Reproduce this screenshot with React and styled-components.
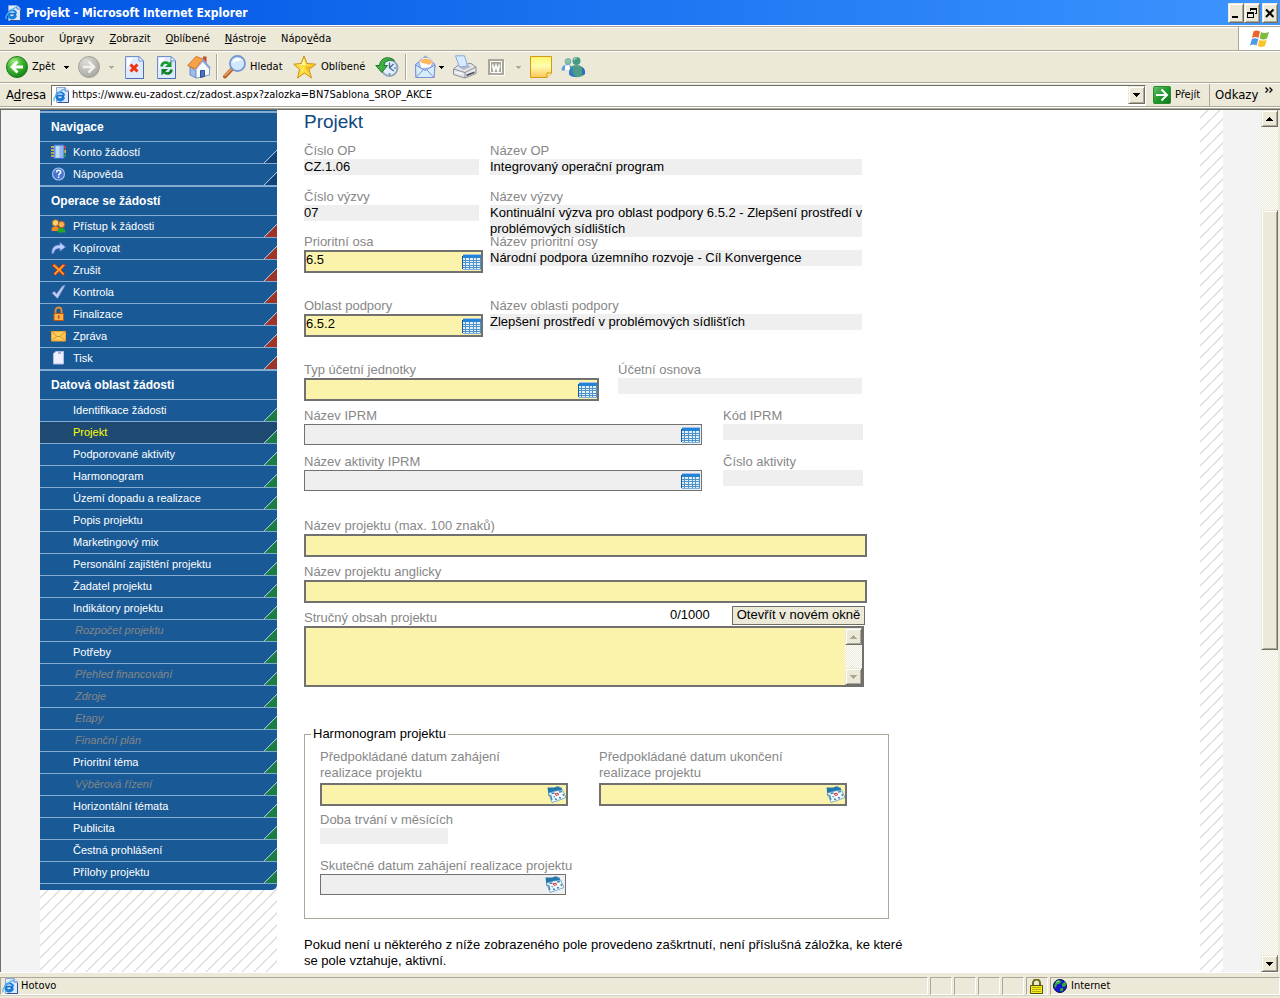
import React from 'react';
import styled, { createGlobalStyle, css } from 'styled-components';

const CHROME = '"DejaVu Sans Condensed", "DejaVu Sans", sans-serif';
const PAGE = '"Liberation Sans", Arial, sans-serif';
const FACE = '#ece9d8';
const SHADOW = '#aca899';
const DARK = '#716f64';

const GlobalStyle = createGlobalStyle`
  *, *::before, *::after { box-sizing: border-box; }
  html, body { margin: 0; height: 100%; }
  #root { height: 100%; }
  button, input, textarea { font: inherit; color: inherit; margin: 0; padding: 0; border-radius: 0; }
  svg { display: block; flex: none; }
`;

const bevel = css`
  border: 1px solid;
  border-color: ${FACE} ${DARK} ${DARK} ${FACE};
  box-shadow: inset 1px 1px 0 #fff, inset -1px -1px 0 ${SHADOW};
  background: ${FACE};
`;

const hatch = css`
  background-color: #fff;
  background-image: linear-gradient(135deg, transparent 45%, #dadada 47%, #dadada 53%, transparent 55%);
  background-size: 12px 12px;
  background-position: 0 -4px;
`;

const checker = css`
  background: repeating-conic-gradient(#fff 0 25%, ${FACE} 0 50%) 0 0 / 2px 2px;
`;

/* ---------- window frame ---------- */

const Window = styled.div`
  display: flex;
  flex-direction: column;
  height: 100vh;
  overflow: hidden;
  background: ${FACE};
  font: 11px/14px ${CHROME};
  color: #000;
`;

const TitleBar = styled.header`
  display: flex;
  align-items: center;
  flex: none;
  height: 25px;
  padding: 0 2px 0 5px;
  gap: 5px;
  background: linear-gradient(90deg, #0054e3, #3d95ff);
  color: #fff;
`;

const WindowTitle = styled.h1`
  flex: 1;
  margin: 0;
  font-size: 12px;
  line-height: 16px;
  font-weight: bold;
`;

const WindowButtons = styled.div`
  display: flex;
`;

const CaptionButton = styled.button`
  ${bevel}
  display: grid;
  place-items: center;
  width: 16px;
  height: 20px;
  margin-left: ${(p) => (p.$apart ? 2 : 0)}px;
  color: #000;
`;

const MenuBar = styled.nav`
  display: flex;
  flex: none;
  height: 26px;
  border-top: 1px solid #fff;
  border-bottom: 1px solid ${SHADOW};
  box-shadow: inset 0 1px 0 ${SHADOW}, inset 0 2px 0 #fff;
`;

const MenuItems = styled.div`
  display: flex;
  flex: 1;
  align-items: center;
  gap: 15px;
  padding: 2px 0 0 9px;
  border-right: 1px solid ${SHADOW};
`;

const MenuItem = styled.button`
  border: 0;
  background: none;
`;

const Flag = styled.div`
  display: grid;
  place-items: center;
  width: 41px;
  margin-top: 2px;
  border-left: 1px solid #fff;
  background: #fff;
`;

const ToolBar = styled.div`
  display: flex;
  align-items: center;
  flex: none;
  height: 32px;
  padding-left: 6px;
  border-top: 1px solid #fff;
  border-bottom: 1px solid ${SHADOW};
`;

const Tool = styled.button`
  display: flex;
  align-items: center;
  flex: none;
  gap: 4px;
  width: ${(p) => p.$w}px;
  border: 0;
  background: none;
  white-space: nowrap;
`;

const Separator = styled.span`
  flex: none;
  width: ${(p) => p.$w}px;
  height: 26px;
  border-left: 1px solid ${SHADOW};
  box-shadow: inset 1px 0 0 #fff;
`;

const AddressBar = styled.form`
  display: flex;
  align-items: center;
  flex: none;
  height: 24px;
  padding-left: 6px;
  border-top: 1px solid #fff;
  border-bottom: 1px solid ${SHADOW};
`;

const AddressLabel = styled.label`
  width: 45px;
  font-size: 13px;
  line-height: 16px;
`;

const AddressField = styled.div`
  display: flex;
  align-items: center;
  flex: 1;
  height: 21px;
  padding-left: 1px;
  gap: 3px;
  border: 1px solid;
  border-color: ${DARK} #fff #fff ${DARK};
  background: #fff;
`;

const AddressInput = styled.input`
  flex: 1;
  min-width: 0;
  border: 0;
  outline: 0;
  background: none;
`;

const DropButton = styled.button`
  ${bevel}
  display: grid;
  place-items: center;
  width: 17px;
  height: 18px;
`;

const GoButton = styled.button`
  display: flex;
  align-items: center;
  gap: 4px;
  width: 56px;
  margin-left: 7px;
  border: 0;
  background: none;
`;

const Links = styled.button`
  display: flex;
  align-items: flex-start;
  justify-content: space-between;
  width: 71px;
  height: 22px;
  padding: 3px 7px 0 5px;
  border: 0;
  border-left: 1px solid ${SHADOW};
  background: none;
  font-size: 13px;
  line-height: 16px;
`;

/* ---------- document area ---------- */

const Viewport = styled.div`
  display: flex;
  flex: 1;
  min-height: 0;
  margin-top: 2px;
  border-top: 1px solid ${DARK};
  border-left: 1px solid ${DARK};
  box-shadow: 0 -1px 0 ${SHADOW}, 0 -2px 0 #fff;
`;

const PageBackground = styled.div`
  flex: 1;
  min-width: 0;
  padding: 0 38px 0 39px;
  overflow: hidden;
  background: #f3f3f3;
`;

const PageBody = styled.div`
  display: flex;
  min-height: 100%;
  padding-right: 23px;
  ${hatch}
  background-position: right 23px top -4px;
`;

const Aside = styled.aside`
  flex: none;
  width: 237px;
  ${hatch}
`;

const SideNav = styled.nav`
  padding: 1px 0 6px;
  border-bottom-right-radius: 5px;
  background: #195a96;
  color: #fff;
  font-family: ${PAGE};
`;

const SideHeading = styled.h2`
  margin: 0;
  padding: 7px 0 6px 11px;
  border-top: 2px solid #85abd0;
  border-bottom: 1px solid #85abd0;
  font-size: 12px;
  line-height: 15px;
  font-weight: bold;
`;

const SideList = styled.ul`
  margin: 0;
  padding: 0;
  list-style: none;
`;

const SideItem = styled.li`
  border-bottom: 1px solid #85abd0;
  &:last-child { border-bottom-width: ${(p) => (p.$closed ? 1 : 0)}px; }
`;

const SideLink = styled.a`
  display: flex;
  align-items: center;
  height: 21px;
  padding-bottom: 2px;
  padding-left: ${(p) => (p.$icon ? 11 : p.$off ? 35 : 33)}px;
  gap: 6px;
  background: linear-gradient(135deg, transparent 48%, #a9c4de 49%, #a9c4de 53%, ${(p) => p.$corner} 54%)
    right bottom / 13px 13px no-repeat ${(p) => (p.$on ? '#1e4970' : 'transparent')};
  color: ${(p) => (p.$off ? '#858585' : p.$on ? '#ffff00' : '#fff')};
  font-style: ${(p) => (p.$off ? 'italic' : 'normal')};
  font-size: 11px;
  line-height: 14px;
  text-decoration: none;
`;

const Main = styled.main`
  flex: 1;
  min-width: 0;
  padding: 0 0 24px 27px;
  background: #fff;
  font: 13px/16px ${PAGE};
`;

const PageTitle = styled.h2`
  margin: 0;
  padding: 0 0 9px;
  color: #0f4880;
  font-size: 19px;
  line-height: 24px;
  font-weight: normal;
`;

const FormRow = styled.div`
  display: flex;
  height: ${(p) => p.$h}px;
  gap: ${(p) => p.$gap || 0}px;
`;

const Field = styled.div`
  flex: none;
  width: ${(p) => p.$w}px;
`;

const Label = styled.label`
  display: block;
  color: #878787;
  white-space: nowrap;
`;

const Value = styled.output`
  display: block;
  min-height: 16px;
  background: #efefef;
  white-space: nowrap;
`;

const Box = styled.div`
  display: flex;
  align-items: center;
  height: ${(p) => (p.$plain ? 21 : 23)}px;
  margin-top: ${(p) => (p.$low ? 2 : 0)}px;
  padding-right: ${(p) => (p.$plain ? 1 : 0)}px;
  border: ${(p) => (p.$plain ? 1 : 2)}px solid #71716f;
  background: ${(p) => (p.$plain ? '#efefef' : '#fbf3ac')};
`;

const TextInput = styled.input`
  flex: 1;
  align-self: flex-start;
  min-width: 0;
  height: 16px;
  border: 0;
  outline: 0;
  background: none;
`;

const PickButton = styled.button`
  border: 0;
  background: none;
`;

const SummaryHead = styled.div`
  display: flex;
  align-items: center;
  width: 561px;
  height: 16px;
`;

const Grow = styled.span`
  flex: 1;
`;

const Counter = styled.span`
  width: 62px;
  margin-top: -6px;
`;

const OpenButton = styled.button`
  height: 19px;
  width: 133px;
  margin-top: -6px;
  border: 1px solid ${DARK};
  background: ${FACE};
  line-height: 16px;
  white-space: nowrap;
`;

const AreaBox = styled.div`
  display: flex;
  width: 560px;
  height: 61px;
  border: 2px solid #71716f;
  background: #fbf3ac;
`;

const TextArea = styled.textarea`
  flex: 1;
  border: 0;
  outline: 0;
  resize: none;
  overflow: hidden;
  background: none;
`;

const Schedule = styled.fieldset`
  width: 585px;
  margin: 0;
  padding: 7px 6px 23px;
  border: 1px solid ${SHADOW};
`;

const Legend = styled.legend`
  padding: 0 2px;
`;

const ScheduleRows = styled.div`
  padding-left: 9px;
`;

const Note = styled.p`
  max-width: 600px;
  margin: 18px 0 0;
`;

/* ---------- scrollbars ---------- */

const ScrollBar = styled.div`
  display: flex;
  flex-direction: column;
  flex: none;
  width: 17px;
  margin-right: ${(p) => (p.$edge ? 2 : 0)}px;
  ${checker}
`;

const ScrollButton = styled.button`
  ${bevel}
  display: grid;
  place-items: center;
  flex: none;
  width: 17px;
  height: 17px;
  color: ${(p) => (p.disabled ? SHADOW : '#000')};
`;

const Track = styled.div`
  flex: ${(p) => p.$part} 1 0;
`;

const Thumb = styled.div`
  ${bevel}
  flex: ${(p) => p.$part} 1 0;
`;

/* ---------- status bar ---------- */

const StatusBar = styled.footer`
  display: flex;
  flex: none;
  height: 26px;
  gap: 2px;
  padding: 4px 0 3px;
  border-top: 1px solid #fff;
  box-shadow: inset 0 -2px 0 ${FACE}, inset 0 -3px 0 #d6d2c2;
`;

const StatusPane = styled.div`
  display: flex;
  align-items: center;
  flex: ${(p) => (p.$w ? 'none' : 1)};
  width: ${(p) => (p.$w ? p.$w + 'px' : 'auto')};
  padding-left: ${(p) => p.$pad || 0}px;
  gap: ${(p) => p.$gap || 4}px;
  border: 1px solid;
  border-color: ${SHADOW} #fff #fff ${SHADOW};
`;

/* ---------- drawings ---------- */

const Caret = ({ color = 'currentColor', up }) => (
  <svg width="7" height="4" viewBox="0 0 7 4" shapeRendering="crispEdges">
    <path d={up ? 'M3 0h1v1h1v1h1v1h1v1H0V3h1V2h1V1h1z' : 'M0 0h7v1H6v1H5v1H4v1H3V3H2V2H1V1H0z'} fill={color} />
  </svg>
);

const SmallCaret = ({ color = '#000' }) => (
  <svg width="5" height="3" viewBox="0 0 5 3" shapeRendering="crispEdges">
    <path d="M0 0h5v1H4v1H3v1H2V2H1V1H0z" fill={color} />
  </svg>
);

const PageIE = () => (
  <svg width="16" height="16" viewBox="0 0 16 16">
    <path d="M3.500.500h8.500l3.500 3.500v11.500h-12z" fill="#dfe9fc" stroke="#8fa6d6" />
    <path d="M12 .5v3.500h3.500" fill="#fff" stroke="#5b76b5" />
    <path d="M15.500 5v10.500H5" fill="none" stroke="#33519b" />
    <path d="M11 8.700H4.300a2.700 2.700 0 0 0 5.300 1.500h1.600" fill="none" stroke="#1471cf" strokeWidth="1.800" />
    <path d="M11.200 10.500A4.100 4.100 0 1 1 11.300 8.700" fill="none" stroke="#1b82dc" strokeWidth="2" />
    <path d="M1.500 14C-.5 12.500 2.500 8 6.500 5s6.500-3.500 6-1" fill="none" stroke="#58b4ee" strokeWidth="1.200" />
  </svg>
);

const BackIcon = () => (
  <svg width="22" height="22" viewBox="0 0 22 22">
    <defs>
      <radialGradient id="backFill" cx=".35" cy=".25" r=".8">
        <stop offset="0" stopColor="#a5ea86" /><stop offset=".5" stopColor="#3fb52c" /><stop offset="1" stopColor="#14801a" />
      </radialGradient>
    </defs>
    <circle cx="11" cy="11" r="10.500" fill="url(#backFill)" stroke="#1d7a1f" />
    <path d="M11.500 5.500 6 11l5.500 5.500M6.500 11H17" fill="none" stroke="#fff" strokeWidth="2.800" />
  </svg>
);

const ForwardIcon = () => (
  <svg width="22" height="22" viewBox="0 0 22 22">
    <defs>
      <radialGradient id="fwdFill" cx=".35" cy=".25" r=".8">
        <stop offset="0" stopColor="#deddd8" /><stop offset="1" stopColor="#a6a59f" />
      </radialGradient>
    </defs>
    <circle cx="11" cy="11" r="10.500" fill="url(#fwdFill)" stroke="#a3a29b" />
    <path d="M10.500 5.500 16 11l-5.500 5.500M15.500 11H5" fill="none" stroke="#f2f1ec" strokeWidth="2.600" />
  </svg>
);

const Sheet = ({ children }) => (
  <svg width="19" height="23" viewBox="0 0 19 23">
    <path d="M.5.500h13.500l4.500 4.500v17.500H.5z" fill="#dfeafd" stroke="#6d8fd0" />
    <path d="M2 2h6L2 13z" fill="#fff" />
    <path d="M14 .5v4.500h4.500z" fill="#fff" stroke="#6d8fd0" />
    <path d="M1 22.500h17.500V6" fill="none" stroke="#4a6fb8" />
    {children}
  </svg>
);

const StopIcon = () => (
  <Sheet><path d="m5.500 8.500 7 7m0-7-7 7" stroke="#f03413" strokeWidth="3" /></Sheet>
);

const RefreshIcon = () => (
  <Sheet>
    <path d="M4.500 10.500c.5-4 4-5 7-3" fill="none" stroke="#17992b" strokeWidth="2.600" />
    <path d="M14.500 4.500v6.500H8z" fill="#17992b" />
    <path d="M14.500 13.500c-.5 4-4 5-7 3" fill="none" stroke="#0e7f22" strokeWidth="2.600" />
    <path d="M4.500 19.500V13H11z" fill="#0e7f22" />
  </Sheet>
);

const HomeIcon = () => (
  <svg width="24" height="24" viewBox="0 0 24 24">
    <path d="M16 1.500h3.500V9H16z" fill="#c8472d" />
    <path d="M3 11.500 9 16v7l-6-3z" fill="#9fbbe8" stroke="#6b8cc7" />
    <path d="m9 14 7-8 6.500 7.500V20L10 23H9z" fill="#f7faff" stroke="#7b98ce" />
    <path d="M.7 10.500 9 1.500l7 2.500-8 10z" fill="#f7a247" stroke="#d3752a" />
    <path d="m15.500 4.500 7.500 9" stroke="#8aa4d8" strokeWidth="2" />
    <path d="M13.500 15.500h4v6l-4 1z" fill="#4c76c0" stroke="#2b4f92" />
  </svg>
);

const SearchIcon = () => (
  <svg width="23" height="24" viewBox="0 0 23 24">
    <path d="M9.500 13.500 2 21.500" stroke="#b5612c" strokeWidth="4" strokeLinecap="round" />
    <path d="M9 13.500 2 20.500" stroke="#f3a168" strokeWidth="1.600" strokeLinecap="round" />
    <circle cx="14.500" cy="8.500" r="7.500" fill="#cfe8fb" stroke="#7595d8" strokeWidth="1.800" />
    <path d="M9.500 8a5 5 0 0 1 5-5c2 0 3.500 1 4.500 2.500-4 0-7 1-9.500 2.500z" fill="#fff" />
  </svg>
);

const StarIcon = () => (
  <svg width="24" height="24" viewBox="0 0 24 24">
    <path d="m11 1 3 7.500 9 .7-7 5.300 2.500 8.500L11.500 18 4.500 23l2-8.500L.8 9.200l7.200-.7z" fill="#fddc3c" stroke="#c98f12" strokeLinejoin="round" />
    <path d="m11 4 1.500 6-8.500 0 5-1zM11.500 11l-3 8 1-5z" fill="#fff7b8" />
    <path d="m12 12 8.500-2-5 4 1.500 6z" fill="#f5b91f" />
  </svg>
);

const HistoryIcon = () => (
  <svg width="24" height="23" viewBox="0 0 24 23">
    <circle cx="14.500" cy="12" r="8" fill="#dff0fc" stroke="#8fa4b8" strokeWidth="2" />
    <path d="M14.500 12V6.500M14.500 12l4.500 3M14.500 12l4-4" stroke="#4b6a91" strokeWidth="1.300" />
    <path d="M19.500 4.500C14-.5 5.500 1 4.500 9.500H.8l6 7 5.700-7H9C9.500 5 14 3.500 19.500 4.500z" fill="#3fae43" stroke="#1c7a27" />
    <circle cx="20" cy="12" r="1" fill="#6d87a8" /><circle cx="14.500" cy="18" r="1" fill="#6d87a8" />
  </svg>
);

const MailIcon = () => (
  <svg width="21" height="24" viewBox="0 0 21 24">
    <path d="M.5 9.500 10.500 1l9.500 8.500-1 13H1z" fill="#a9cdf6" stroke="#7e8fd2" />
    <path d="M4 6.500 8 2.500h5.500l4.500 5-3 5.500-9 .5z" fill="#fff" stroke="#8a9cd4" strokeWidth=".7" />
    <path d="M5 7c1-4 9-5.500 12.500.5L14 10c-3-2-6-1-9-3z" fill="#fbb85c" />
    <path d="M.5 10 10 15.500 20 10l-1 12.500H1z" fill="#d6edfd" stroke="#7e8fd2" />
    <path d="m1 22.500 7.500-8m10.500 8-7.500-8" stroke="#7e8fd2" />
  </svg>
);

const PrintIcon = () => (
  <svg width="24" height="24" viewBox="0 0 24 24">
    <path d="M.5 14 6 9.500l12-1L23 12v6.500L12 23 .5 19.500z" fill="#e5e5ea" stroke="#8c8c98" />
    <path d="m.5 14 11.500 3.500 11-5.500M12 17.500V23" fill="none" stroke="#8c8c98" />
    <path d="m6 12 9.500-1.500 2.500 1.500-7.500 3z" fill="#b9bac5" />
    <path d="M2.500.800h9L14.500 11 6.500 12z" fill="#d9ecff" stroke="#88a6dc" />
    <path d="m13.500 19.500 8-3v1.500l-8 3.200z" fill="#44444e" />
    <path d="m2.500 17 7 2" stroke="#fff" />
  </svg>
);

const WordIcon = () => (
  <svg width="17" height="17" viewBox="0 0 17 17">
    <path d="M2 2h15v15H2z" fill="#fff" />
    <path d="M0 0h16v16H0z" fill="#aca899" />
    <path d="M2.500 2.500h11v11h-11z" fill="none" stroke="#fff" />
    <path d="M4.500 5.500 6 12l2-5.500L10 12l1.500-6.500" fill="none" stroke="#fff" strokeWidth="1.700" />
  </svg>
);

const NoteIcon = () => (
  <svg width="22" height="22" viewBox="0 0 22 22">
    <defs>
      <linearGradient id="noteFill" x1="0" y1="0" x2="0" y2="1">
        <stop offset="0" stopColor="#fff46c" /><stop offset=".45" stopColor="#ffffb0" /><stop offset="1" stopColor="#ffc45a" />
      </linearGradient>
    </defs>
    <path d="M.5.500h21V17L17 21.500H.5z" fill="url(#noteFill)" stroke="#d39a0c" />
    <path d="M17 21.500V17h4.500" fill="#fff2a0" stroke="#d39a0c" />
  </svg>
);

const PeopleIcon = () => (
  <svg width="25" height="22" viewBox="0 0 25 22">
    <circle cx="7" cy="5.500" r="3" fill="#8bc4a0" stroke="#5b8cb5" strokeWidth=".6" />
    <path d="M.5 14.500c0-4.500 3-6 6-6s5.500 2 5.500 6z" fill="#5aa0dd" />
    <path d="M4 9.500 8.500 9 9 14.500H4z" fill="#fff" />
    <circle cx="15.500" cy="5" r="4" fill="#459a83" />
    <path d="M8 18c0-6 3-9 7.500-9s9 3 8.500 9c-3 4-13 4.500-16 0z" fill="#4d9c86" />
    <path d="M8 18c0-4 1.500-6 4-7-1 4 0 8 4 10-4 .2-7-.5-8-3z" fill="#3978c3" />
    <path d="M13 4a3 3 0 0 1 3-2" stroke="#a8dcb8" strokeWidth="1.200" fill="none" />
    <path d="M21 11c2.500 1.500 3.500 4 3 7l-3 1.500z" fill="#2f6fc0" />
  </svg>
);

const FlagIcon = () => (
  <svg width="20" height="18" viewBox="0 0 20 18">
    <path d="M3.500 1.500c2-1.500 4-1.500 6.500 0L8.500 8C6.500 6.800 4 6.800 2 8z" fill="#f0622d" />
    <path d="M11 2c2.500 1.200 5 1.200 8 0l-2 6.500c-2.500 1.200-5 1.200-7.300 0z" fill="#7db93c" />
    <path d="M1.800 9.200c2-1.300 4.300-1.300 6.500 0L6.500 15.500c-2-1.200-4-1.200-6.500 0z" fill="#4f97e8" />
    <path d="M9.300 9.700c2.300 1.200 5 1.200 7.400 0L15 16c-2.500 1.400-5 1.400-7.300 0z" fill="#fbc52e" />
  </svg>
);

const GoIcon = () => (
  <svg width="18" height="18" viewBox="0 0 18 18">
    <defs>
      <linearGradient id="goFill" x1="0" y1="0" x2="1" y2="1">
        <stop offset="0" stopColor="#6cc06a" /><stop offset=".5" stopColor="#1f9a2c" /><stop offset="1" stopColor="#0c7a18" />
      </linearGradient>
    </defs>
    <rect x=".5" y=".5" width="17" height="17" rx="1" fill="url(#goFill)" stroke="#2b8a35" />
    <path d="M3 9h11M8.500 3.500l5.500 5.500-5.500 5.500" fill="none" stroke="#fff" strokeWidth="2" />
  </svg>
);

const LockIcon = () => (
  <svg width="13" height="15" viewBox="0 0 13 15">
    <path d="M3 7V4a3.500 3.500 0 0 1 7 0v3" fill="none" stroke="#6f6a10" strokeWidth="2" />
    <path d="M.5 6.500h12v8H.5z" fill="#f5ee22" stroke="#55510a" />
    <path d="M2 8.500h9m-9 2h9m-9 2h9" stroke="#b5ac10" />
  </svg>
);

const GlobeIcon = () => (
  <svg width="14" height="14" viewBox="0 0 14 14">
    <circle cx="7" cy="7" r="6.500" fill="#1616c8" stroke="#0a0a4a" />
    <path d="M3 2.500 6 1l2.500 1L7 4.500 4 5.500 2.500 9 1 7zM9 5l3-2.500 1.500 3-1.500 2-2.500.5zM7.500 9l3 .5-1 3-2.500-.5z" fill="#2fae3c" />
    <path d="M3.500 3 6 2" stroke="#a9f0ad" />
  </svg>
);

const GridIcon = () => (
  <svg width="19" height="16" viewBox="0 0 19 16" shapeRendering="crispEdges">
    <path d="M1 1h18v15H1z" fill="#e4eff8" />
    <path d="M1 0h18v1H1z" fill="#a5c0e6" />
    <path d="M1 1h18v3H1z" fill="#2383d6" />
    <path d="M0 2h1v13H0z" fill="#1458a0" />
    <path d="M1 6.500h18M1 8.500h18M1 11.500h18M1 13.500h18M3.500 4v12M7.500 4v12M11.500 4v12M14.500 4v12M18.500 4v12" stroke="#4d92cb" />
    <path d="M1 15.500h18" stroke="#7db2dc" />
  </svg>
);

const CalendarIcon = () => (
  <svg width="19" height="17" viewBox="0 0 19 17">
    <path d="M.5 1.500h7l2-1h3v1h2l1 3.500-14 5z" fill="#2277ad" />
    <path d="m1.500 7 7-2 7-1 3.500 7.500-8 3-6 2z" fill="#f2f8fc" stroke="#4c92bf" strokeWidth=".7" />
    <path d="m3.500 9 1.500 5M8 13l2 .5M12 11.500l2 .5M4.500 7.500l3-.5M12 6l3-.3M16 8l.7 2M6.500 10.500l1.500.5" stroke="#3b86b8" strokeWidth="1.300" />
    <path d="M8 7.800 11 7.200l.6 1.600-2.600.6z" fill="none" stroke="#d8373a" strokeWidth="1" />
  </svg>
);

const BookIcon = () => (
  <svg width="16" height="16" viewBox="0 0 16 16">
    <path d="M3 1h10v13.500H3z" fill="#8fb7f5" stroke="#3d6fc4" />
    <path d="M5 2h3.500v11.500H5z" fill="#c5dbff" />
    <path d="M0 3h3M0 6h3M0 9h3M0 12h3" stroke="#f2c440" strokeWidth="1.400" />
    <path d="M13.500 2h1.500v3h-1.500z" fill="#e33" /><path d="M13.500 6h1.500v3h-1.500z" fill="#f7c229" /><path d="M13.500 10h1.500v3h-1.500z" fill="#2ba63a" />
  </svg>
);

const HelpIcon = () => (
  <svg width="16" height="16" viewBox="0 0 16 16">
    <circle cx="7.500" cy="8" r="6" fill="#4474d0" stroke="#a3bdf0" strokeWidth="1.200" />
    <path d="M5.500 6.500c0-3 4.300-2.700 4.200-.3C9.700 7.600 7.600 7.700 7.600 9.500M7.600 10.500v1.600" fill="none" stroke="#fff" strokeWidth="1.500" />
  </svg>
);

const UsersIcon = () => (
  <svg width="16" height="16" viewBox="0 0 16 16">
    <path d="M.5 13c0-4.500 2-4.500 4-4.500s4 1 4 4.500z" fill="#f28a22" />
    <circle cx="4.500" cy="5" r="3.200" fill="#fbcf74" stroke="#c4751b" />
    <path d="M6.500 14.500c0-4.500 2-4.500 4-4.500s4 1 4 4.500z" fill="#28a52f" />
    <circle cx="10.500" cy="6.500" r="3.200" fill="#f9b15c" stroke="#b65a16" />
  </svg>
);

const CopyIcon = () => (
  <svg width="16" height="16" viewBox="0 0 16 16">
    <path d="M1 13.500C.5 7.500 3.500 5 9 5V2.500l5.500 4.500L9 11V8.500c-4 0-5.500 1-6.500 5z" fill="#b9ccff" stroke="#6d83d8" strokeWidth=".8" />
  </svg>
);

const CancelIcon = () => (
  <svg width="16" height="16" viewBox="0 0 16 16">
    <path d="M1 3.500 3.500 2 8 6l4-4 2.500 1-4.500 5 4 4-2 1.500-4-4-3.500 4-2-2L6 8z" fill="#fd9a2c" stroke="#c3320f" />
  </svg>
);

const CheckIcon = () => (
  <svg width="16" height="16" viewBox="0 0 16 16">
    <path d="M1 9 3.500 7.500 5.500 10 11.500 2l2.500-.5-7.500 13z" fill="#c2cbf2" stroke="#7f8fd2" strokeWidth=".7" />
  </svg>
);

const PadlockIcon = () => (
  <svg width="16" height="16" viewBox="0 0 16 16">
    <path d="M4.500 8V4.500a3 3 0 0 1 6 0V8" fill="none" stroke="#e88a31" strokeWidth="1.800" />
    <path d="M3 7.500h9.500v7H3z" fill="#fbb04a" stroke="#c05a14" />
    <path d="M7 9.500h1.500v3H7z" fill="#a44a0c" />
  </svg>
);

const MessageIcon = () => (
  <svg width="16" height="16" viewBox="0 0 16 16">
    <path d="M.5 3.500h14v9.500H.5z" fill="#fdce5e" stroke="#f0a32e" />
    <path d="m1 4 5 4.500h3L14 4M1 12.500l4.500-4m8.500 4-4.500-4" fill="none" stroke="#e08f20" />
  </svg>
);

const PaperIcon = () => (
  <svg width="16" height="16" viewBox="0 0 16 16">
    <path d="M2.500 3.500 5 1.500h7.500v12.500h-10z" fill="#eef0ff" stroke="#b4b9e6" />
    <path d="M7 3h3" stroke="#6c73b8" />
  </svg>
);

/* ---------- data ---------- */

const MENU = [['', 'S', 'oubor'], ['Úpr', 'a', 'vy'], ['', 'Z', 'obrazit'], ['', 'O', 'blíbené'], ['', 'N', 'ástroje'], ['Nápo', 'v', 'ěda']];

const GROUPS = [
  {
    title: 'Navigace', corner: '#12427a',
    items: [{ text: 'Konto žádostí', icon: BookIcon }, { text: 'Nápověda', icon: HelpIcon }],
  },
  {
    title: 'Operace se žádostí', corner: '#9c3527',
    items: [
      { text: 'Přístup k žádosti', icon: UsersIcon },
      { text: 'Kopírovat', icon: CopyIcon },
      { text: 'Zrušit', icon: CancelIcon },
      { text: 'Kontrola', icon: CheckIcon },
      { text: 'Finalizace', icon: PadlockIcon },
      { text: 'Zpráva', icon: MessageIcon },
      { text: 'Tisk', icon: PaperIcon },
    ],
  },
  {
    title: 'Datová oblast žádosti', corner: '#1a7d45', closed: true,
    items: [
      { text: 'Identifikace žádosti' }, { text: 'Projekt', on: true }, { text: 'Podporované aktivity' },
      { text: 'Harmonogram' }, { text: 'Území dopadu a realizace' }, { text: 'Popis projektu' },
      { text: 'Marketingový mix' }, { text: 'Personální zajištění projektu' }, { text: 'Žadatel projektu' },
      { text: 'Indikátory projektu' }, { text: 'Rozpočet projektu', off: true }, { text: 'Potřeby' },
      { text: 'Přehled financování', off: true }, { text: 'Zdroje', off: true }, { text: 'Etapy', off: true },
      { text: 'Finanční plán', off: true }, { text: 'Prioritní téma' }, { text: 'Výběrová řízení', off: true },
      { text: 'Horizontální témata' }, { text: 'Publicita' }, { text: 'Čestná prohlášení' }, { text: 'Přílohy projektu' },
    ],
  },
];

/* ---------- composed parts ---------- */

function ReadOnly({ id, label, width, children }) {
  return (
    <Field $w={width}>
      <Label htmlFor={id}>{label}</Label>
      <Value id={id}>{children}</Value>
    </Field>
  );
}

function Entry({ id, label, width, plain, low, value = '', pick: Pick, pickLabel }) {
  return (
    <Field $w={width}>
      <Label htmlFor={id}>{label}</Label>
      <Box $plain={plain} $low={low}>
        <TextInput id={id} defaultValue={value} readOnly={plain} />
        {Pick && <PickButton type="button" aria-label={pickLabel}><Pick /></PickButton>}
      </Box>
    </Field>
  );
}

function Sidebar() {
  return (
    <Aside>
      <SideNav aria-label="Navigace">
        {GROUPS.map((g) => (
          <React.Fragment key={g.title}>
            <SideHeading>{g.title}</SideHeading>
            <SideList>
              {g.items.map(({ text, icon: Icon, on, off }) => (
                <SideItem key={text} $closed={g.closed}>
                  <SideLink href="#" $icon={!!Icon} $on={on} $off={off} $corner={g.corner}>
                    {Icon && <Icon />}
                    {text}
                  </SideLink>
                </SideItem>
              ))}
            </SideList>
          </React.Fragment>
        ))}
      </SideNav>
    </Aside>
  );
}

function ProjectForm() {
  const table = { pick: GridIcon, pickLabel: 'Vybrat ze seznamu' };
  const date = { pick: CalendarIcon, pickLabel: 'Vybrat datum' };
  return (
    <Main>
      <PageTitle>Projekt</PageTitle>
      <FormRow $h={46} $gap={11}>
        <ReadOnly id="op" label="Číslo OP" width={175}>CZ.1.06</ReadOnly>
        <ReadOnly id="opn" label="Název OP" width={372}>Integrovaný operační program</ReadOnly>
      </FormRow>
      <FormRow $h={45} $gap={11}>
        <ReadOnly id="vyzva" label="Číslo výzvy" width={175}>07</ReadOnly>
        <ReadOnly id="vyzvan" label="Název výzvy" width={372}>
          Kontinuální výzva pro oblast podpory 6.5.2 - Zlepšení prostředí v<br />problémových sídlištích
        </ReadOnly>
      </FormRow>
      <FormRow $h={64} $gap={7}>
        <Entry id="osa" label="Prioritní osa" width={179} value="6.5" {...table} />
        <ReadOnly id="osan" label="Název prioritní osy" width={372}>Národní podpora územního rozvoje - Cíl Konvergence</ReadOnly>
      </FormRow>
      <FormRow $h={64} $gap={7}>
        <Entry id="oblast" label="Oblast podpory" width={179} value="6.5.2" {...table} />
        <ReadOnly id="oblastn" label="Název oblasti podpory" width={372}>Zlepšení prostředí v problémových sídlišťích</ReadOnly>
      </FormRow>
      <FormRow $h={46} $gap={19}>
        <Entry id="typ" label="Typ účetní jednotky" width={295} {...table} />
        <ReadOnly id="osnova" label="Účetní osnova" width={244} />
      </FormRow>
      <FormRow $h={46} $gap={21}>
        <Entry id="iprm" label="Název IPRM" width={398} plain {...table} />
        <ReadOnly id="kod" label="Kód IPRM" width={140} />
      </FormRow>
      <FormRow $h={64} $gap={21}>
        <Entry id="akt" label="Název aktivity IPRM" width={398} plain {...table} />
        <ReadOnly id="cakt" label="Číslo aktivity" width={140} />
      </FormRow>
      <FormRow $h={46}><Entry id="nazev" label="Název projektu (max. 100 znaků)" width={563} /></FormRow>
      <FormRow $h={46}><Entry id="nazeven" label="Název projektu anglicky" width={563} /></FormRow>
      <FormRow $h={116}>
        <Field $w={563}>
          <SummaryHead>
            <Label htmlFor="obsah">Stručný obsah projektu</Label>
            <Grow />
            <Counter>0/1000</Counter>
            <OpenButton type="button">Otevřít v novém okně</OpenButton>
          </SummaryHead>
          <AreaBox>
            <TextArea id="obsah" />
            <ScrollBar>
              <ScrollButton disabled aria-label="Nahoru"><Caret up /></ScrollButton>
              <Track $part={1} />
              <ScrollButton disabled aria-label="Dolů"><Caret /></ScrollButton>
            </ScrollBar>
          </AreaBox>
        </Field>
      </FormRow>
      <Schedule>
        <Legend>Harmonogram projektu</Legend>
        <ScheduleRows>
          <FormRow $h={63} $gap={31}>
            <Entry id="od" label={<>Předpokládané datum zahájení<br />realizace projektu</>} width={248} low {...date} />
            <Entry id="do" label={<>Předpokládané datum ukončení<br />realizace projektu</>} width={248} low {...date} />
          </FormRow>
          <FormRow $h={46}><ReadOnly id="doba" label="Doba trvání v měsících" width={128} /></FormRow>
          <FormRow $h={37}>
            <Entry id="skut" label="Skutečné datum zahájení realizace projektu" width={246} plain {...date} />
          </FormRow>
        </ScheduleRows>
      </Schedule>
      <Note>
        Pokud není u některého z níže zobrazeného pole provedeno zaškrtnutí, není příslušná záložka, ke které se pole
        vztahuje, aktivní.
      </Note>
    </Main>
  );
}

export default function App() {
  return (
    <Window>
      <GlobalStyle />
      <TitleBar>
        <PageIE />
        <WindowTitle>Projekt - Microsoft Internet Explorer</WindowTitle>
        <WindowButtons>
          <CaptionButton aria-label="Minimalizovat">
            <svg width="10" height="10" shapeRendering="crispEdges"><path d="M1 8h6v2H1z" /></svg>
          </CaptionButton>
          <CaptionButton aria-label="Obnovit">
            <svg width="10" height="10" shapeRendering="crispEdges">
              <path d="M3 0h7v6H8V5h1V2H4v1H3zM0 4h7v6H0zM1 6v3h5V6z" fillRule="evenodd" />
            </svg>
          </CaptionButton>
          <CaptionButton $apart aria-label="Zavřít">
            <svg width="10" height="10"><path d="m1 1.500 7.500 7.500m0-7.500L1 9" stroke="#000" strokeWidth="2" /></svg>
          </CaptionButton>
        </WindowButtons>
      </TitleBar>
      <MenuBar>
        <MenuItems>
          {MENU.map(([a, u, b]) => <MenuItem key={a + u + b}>{a}<u>{u}</u>{b}</MenuItem>)}
        </MenuItems>
        <Flag><FlagIcon /></Flag>
      </MenuBar>
      <ToolBar>
        <Tool $w={58}><BackIcon />Zpět</Tool>
        <Tool $w={14} aria-label="Historie zpět"><SmallCaret /></Tool>
        <Tool $w={31} aria-label="Vpřed"><ForwardIcon /></Tool>
        <Tool $w={16} aria-label="Historie vpřed"><SmallCaret color={SHADOW} /></Tool>
        <Tool $w={32} aria-label="Zastavit"><StopIcon /></Tool>
        <Tool $w={30} aria-label="Aktualizovat"><RefreshIcon /></Tool>
        <Tool $w={29} aria-label="Domů"><HomeIcon /></Tool>
        <Separator $w={7} />
        <Tool $w={70}><SearchIcon />Hledat</Tool>
        <Tool $w={82}><StarIcon />Oblíbené</Tool>
        <Tool $w={30} aria-label="Historie"><HistoryIcon /></Tool>
        <Separator $w={10} />
        <Tool $w={24} aria-label="Pošta"><MailIcon /></Tool>
        <Tool $w={14} aria-label="Další pošta"><SmallCaret /></Tool>
        <Tool $w={35} aria-label="Tisk"><PrintIcon /></Tool>
        <Tool $w={28} aria-label="Upravit"><WordIcon /></Tool>
        <Tool $w={14} aria-label="Další úpravy"><SmallCaret color={SHADOW} /></Tool>
        <Tool $w={31} aria-label="Poznámka"><NoteIcon /></Tool>
        <Tool $w={25} aria-label="Messenger"><PeopleIcon /></Tool>
      </ToolBar>
      <AddressBar onSubmit={(e) => e.preventDefault()}>
        <AddressLabel htmlFor="url">A<u>d</u>resa</AddressLabel>
        <AddressField>
          <PageIE />
          <AddressInput id="url" defaultValue="https://www.eu-zadost.cz/zadost.aspx?zalozka=BN7Sablona_SROP_AKCE" />
          <DropButton type="button" aria-label="Rozbalit"><Caret /></DropButton>
        </AddressField>
        <GoButton><GoIcon />Přejít</GoButton>
        <Links type="button">
          Odkazy
          <svg width="8" height="6" viewBox="0 0 8 6"><path d="m.5.500 2.500 2.500L.5 5.500M4.500.500 7 3 4.500 5.500" fill="none" stroke="#000" strokeWidth="1.300" /></svg>
        </Links>
      </AddressBar>
      <Viewport>
        <PageBackground>
          <PageBody>
            <Sidebar />
            <ProjectForm />
          </PageBody>
        </PageBackground>
        <ScrollBar $edge>
          <ScrollButton aria-label="Nahoru"><Caret up /></ScrollButton>
          <Track $part={83} />
          <Thumb $part={439} />
          <Track $part={306} />
          <ScrollButton aria-label="Dolů"><Caret /></ScrollButton>
        </ScrollBar>
      </Viewport>
      <StatusBar>
        <StatusPane $pad={1} $gap={3}><PageIE />Hotovo</StatusPane>
        <StatusPane $w={22} />
        <StatusPane $w={22} />
        <StatusPane $w={22} />
        <StatusPane $w={22} />
        <StatusPane $w={22} $pad={3}><LockIcon /></StatusPane>
        <StatusPane $w={230} $pad={2} $gap={4}><GlobeIcon />Internet</StatusPane>
      </StatusBar>
    </Window>
  );
}
